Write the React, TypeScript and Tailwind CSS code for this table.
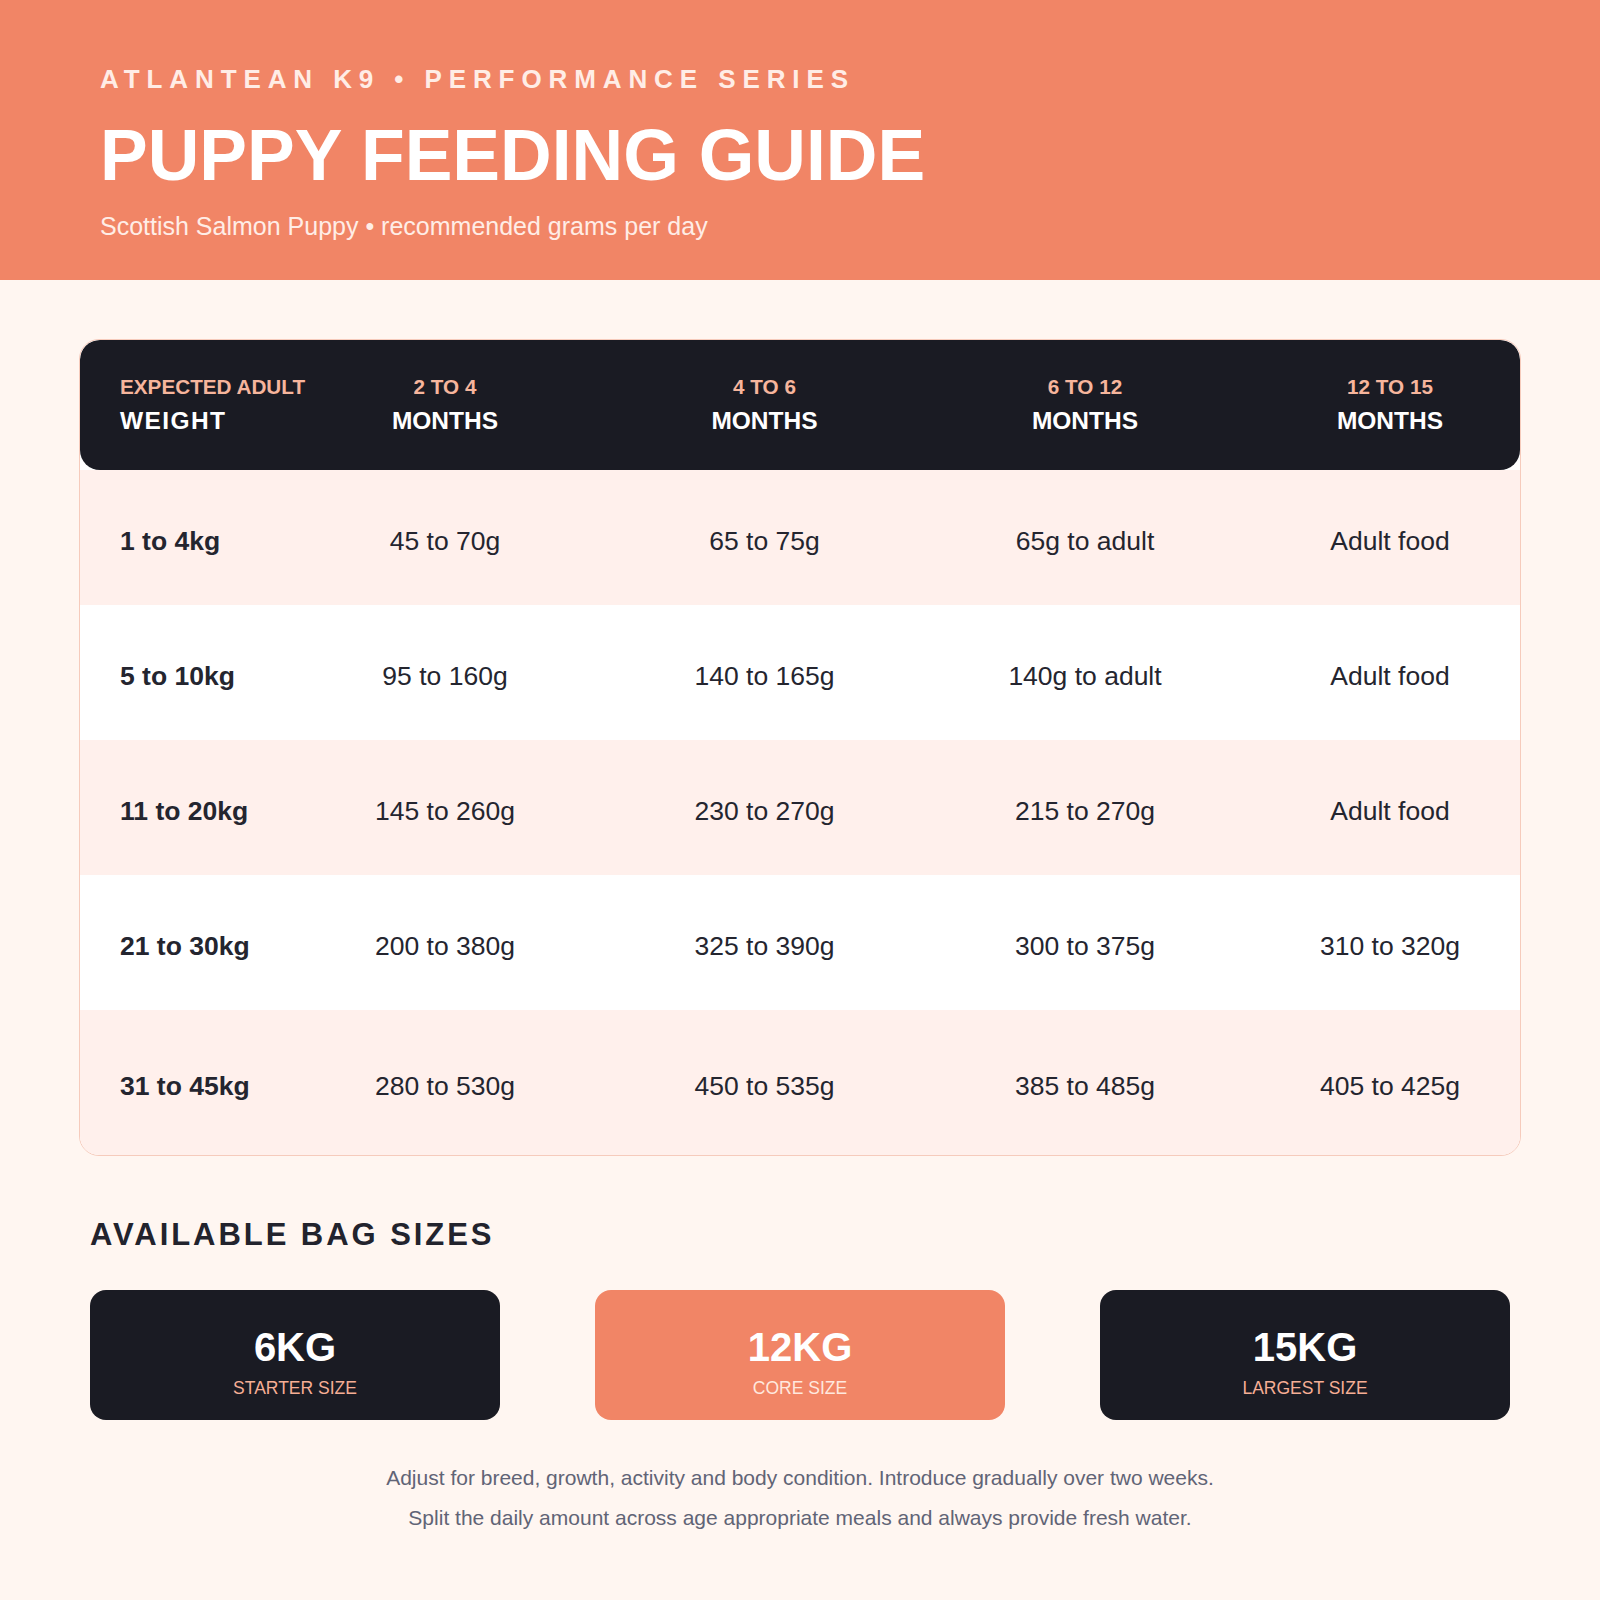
import React from "react";

type Row = {
  weight: string;
  values: string[];
};

const columns = [
  { top: "EXPECTED ADULT", bottom: "WEIGHT" },
  { top: "2 TO 4", bottom: "MONTHS" },
  { top: "4 TO 6", bottom: "MONTHS" },
  { top: "6 TO 12", bottom: "MONTHS" },
  { top: "12 TO 15", bottom: "MONTHS" },
];

const rows: Row[] = [
  { weight: "1 to 4kg", values: ["45 to 70g", "65 to 75g", "65g to adult", "Adult food"] },
  { weight: "5 to 10kg", values: ["95 to 160g", "140 to 165g", "140g to adult", "Adult food"] },
  { weight: "11 to 20kg", values: ["145 to 260g", "230 to 270g", "215 to 270g", "Adult food"] },
  { weight: "21 to 30kg", values: ["200 to 380g", "325 to 390g", "300 to 375g", "310 to 320g"] },
  { weight: "31 to 45kg", values: ["280 to 530g", "450 to 535g", "385 to 485g", "405 to 425g"] },
];

const bags = [
  { size: "6KG", label: "STARTER SIZE", accent: false },
  { size: "12KG", label: "CORE SIZE", accent: true },
  { size: "15KG", label: "LARGEST SIZE", accent: false },
];

const grid = "grid grid-cols-[191px_348px_291px_350px_260px]";

function FeedingTable() {
  return (
    <div className="overflow-hidden rounded-[20px] border border-[#F6CBBC] bg-white">
      {/* header */}
      <div className={`${grid} h-[130px] items-center rounded-[20px] bg-[#1A1B23]`}>
        {columns.map((col, i) => (
          <div
            key={col.top}
            className={
              "flex flex-col whitespace-nowrap font-bold leading-none " +
              (i === 0 ? "items-start pl-10 pt-px" : "items-center pt-px")
            }
          >
            <span className="text-[20.7px] text-[#F6B59C]">{col.top}</span>
            <span
              className={
                "mt-[11px] text-[24.5px] text-white " + (i === 0 ? "tracking-[1.4px]" : "")
              }
            >
              {col.bottom}
            </span>
          </div>
        ))}
      </div>

      {/* body */}
      {rows.map((row, r) => (
        <div
          key={row.weight}
          className={
            `${grid} items-center pt-2 text-[26.5px] leading-none text-[#24252F] ` +
            (r % 2 === 0 ? "bg-[#FFF0EC] " : "bg-white ") +
            (r === rows.length - 1 ? "h-[145px]" : "h-[135px]")
          }
        >
          <div className="whitespace-nowrap pl-10 font-bold">{row.weight}</div>
          {row.values.map((v, i) => (
            <div key={i} className="whitespace-nowrap text-center">
              {v}
            </div>
          ))}
        </div>
      ))}
    </div>
  );
}

export default function App() {
  return (
    <div className="min-h-[1600px] w-[1600px] bg-[#FFF6F1] font-['Liberation_Sans',Arial,sans-serif]">
      <header className="h-[280px] bg-[#F18566] px-[100px] pt-[66px]">
        <p className="text-[26px] font-bold leading-none tracking-[6.9px] text-[#FFEDE6]">
          ATLANTEAN K9 • PERFORMANCE SERIES
        </p>
        <h1 className="mt-[28px] text-[71.5px] font-bold leading-none text-white">
          PUPPY FEEDING GUIDE
        </h1>
        <p className="mt-[22px] text-[25px] leading-none text-[#FFEDE6]">
          Scottish Salmon Puppy • recommended grams per day
        </p>
      </header>

      <main className="px-[79px] pt-[59px]">
        <FeedingTable />

        <section className="mx-[11px] mt-[63px]">
          <h2 className="text-[31px] font-bold leading-none tracking-[0.095em] text-[#22232D]">
            AVAILABLE BAG SIZES
          </h2>
          <div className="mt-[40px] grid grid-cols-3 gap-[95px]">
            {bags.map((bag) => (
              <div
                key={bag.size}
                className={
                  "flex h-[130px] flex-col items-center rounded-[16px] pt-[37px] leading-none " +
                  (bag.accent ? "bg-[#F18566]" : "bg-[#1A1B23]")
                }
              >
                <span className="text-[40px] font-bold text-white">{bag.size}</span>
                <span
                  className={
                    "mt-[13px] text-[17.5px] " +
                    (bag.accent ? "text-[#FFE8DE]" : "text-[#F6AE95]")
                  }
                >
                  {bag.label}
                </span>
              </div>
            ))}
          </div>
        </section>

        <footer className="mt-[38px] text-center text-[21px] leading-[40px] text-[#616476]">
          <p>Adjust for breed, growth, activity and body condition. Introduce gradually over two weeks.</p>
          <p>Split the daily amount across age appropriate meals and always provide fresh water.</p>
        </footer>
      </main>
    </div>
  );
}
